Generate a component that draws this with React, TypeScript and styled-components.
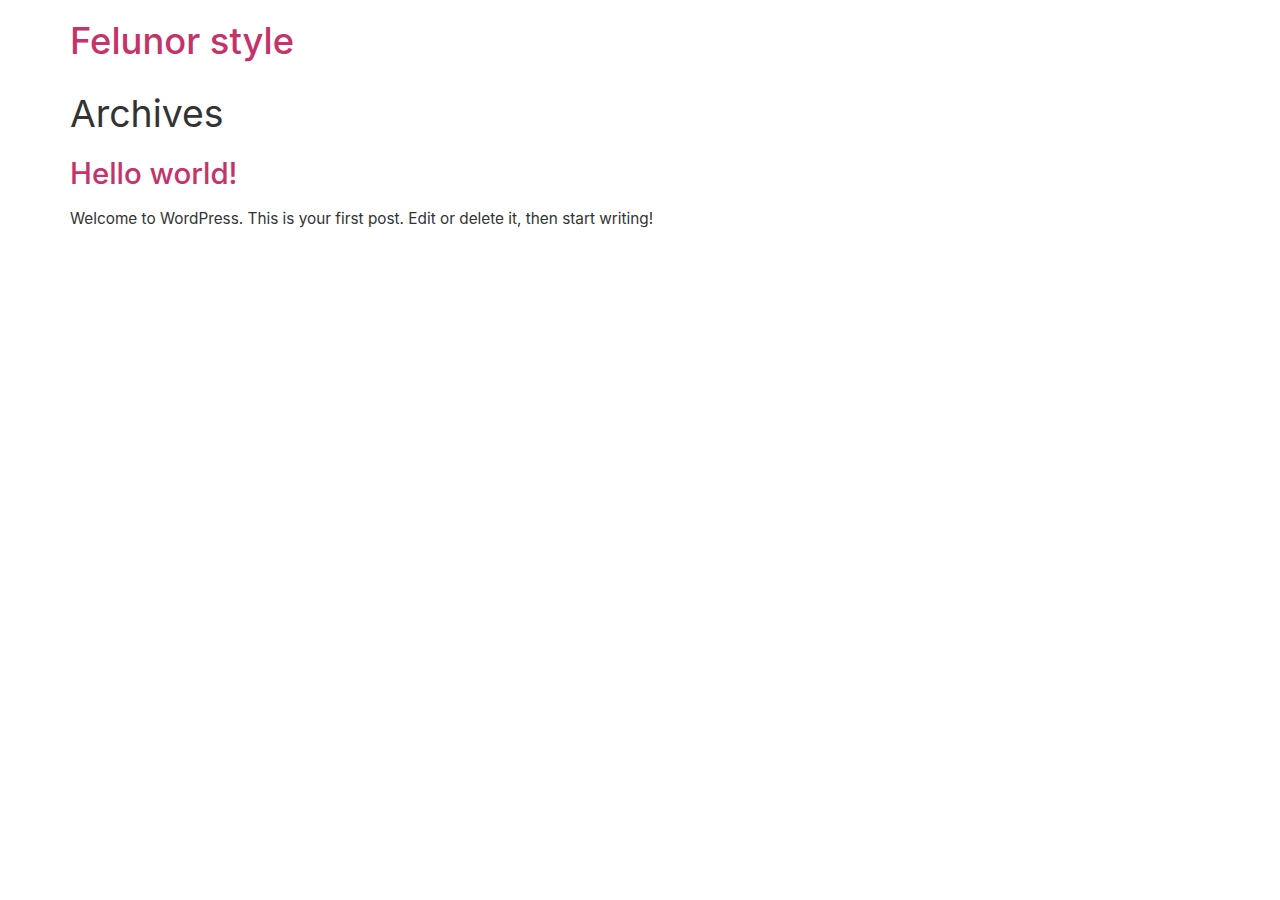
import React from 'react'
import styled, { createGlobalStyle } from 'styled-components'

const GlobalStyle = createGlobalStyle`
  body {
    margin: 0;
    background: #fff;
    font-family: Inter, "Noto Sans", sans-serif;
    color: #333;
  }
`

const Page = styled.div`
  padding: 0 70px;
`

const Header = styled.header`
  padding-top: 19px;
`

const SiteTitle = styled.a`
  display: inline-block;
  font-size: 36.3px;
  line-height: 44px;
  font-weight: 500;
  color: #c4336a;
  text-decoration: none;
`

const Main = styled.main`
  margin-top: 28px;
`

const PageTitle = styled.h1`
  margin: 0;
  font-size: 37.4px;
  line-height: 46px;
  font-weight: 400;
  color: #333;
`

const PostTitle = styled.h2`
  margin: 18px 0 0;
  font-size: 29.4px;
  line-height: 38px;
  font-weight: 450;
  a {
    color: #c4336a;
    text-decoration: none;
  }
`

const Excerpt = styled.p`
  margin: 14px 0 0;
  font-size: 15.33px;
  line-height: 23px;
`

const App: React.FC = () => {
  return (
    <>
      <GlobalStyle />
      <Page>
        <Header>
          <SiteTitle href="#">Felunor style</SiteTitle>
        </Header>
        <Main>
          <PageTitle>Archives</PageTitle>
          <article>
            <PostTitle>
              <a href="#">Hello world!</a>
            </PostTitle>
            <Excerpt>
              Welcome to WordPress. This is your first post. Edit or delete it, then start writing!
            </Excerpt>
          </article>
        </Main>
      </Page>
    </>
  )
}

export default App
